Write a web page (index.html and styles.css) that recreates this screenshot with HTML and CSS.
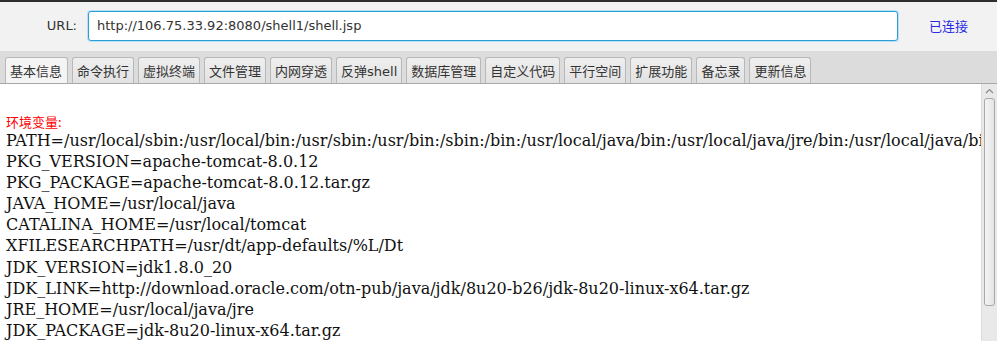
FILE: index.html
```html
<!DOCTYPE html>
<html>
<head>
<meta charset="utf-8">
<link rel="stylesheet" href="styles.css">
</head>
<body>
<div class="topline"></div>
<div class="urlbar">
  <label class="url-label">URL:</label>
  <div class="url-input">http://106.75.33.92:8080/shell1/shell.jsp</div>
  <span class="status">已连接</span>
</div>
<div class="tabs">
  <div class="tab active">基本信息</div>
  <div class="tab">命令执行</div>
  <div class="tab">虚拟终端</div>
  <div class="tab">文件管理</div>
  <div class="tab">内网穿透</div>
  <div class="tab">反弹shell</div>
  <div class="tab">数据库管理</div>
  <div class="tab">自定义代码</div>
  <div class="tab">平行空间</div>
  <div class="tab">扩展功能</div>
  <div class="tab">备忘录</div>
  <div class="tab">更新信息</div>
</div>
<div class="panel">
  <div class="content">
    <div class="heading">环境变量:</div>
    <div class="line">PATH=/usr/local/sbin:/usr/local/bin:/usr/sbin:/usr/bin:/sbin:/bin:/usr/local/java/bin:/usr/local/java/jre/bin:/usr/local/java/bin</div>
    <div class="line">PKG_VERSION=apache-tomcat-8.0.12</div>
    <div class="line">PKG_PACKAGE=apache-tomcat-8.0.12.tar.gz</div>
    <div class="line">JAVA_HOME=/usr/local/java</div>
    <div class="line">CATALINA_HOME=/usr/local/tomcat</div>
    <div class="line">XFILESEARCHPATH=/usr/dt/app-defaults/%L/Dt</div>
    <div class="line">JDK_VERSION=jdk1.8.0_20</div>
    <div class="line">JDK_LINK=http://download.oracle.com/otn-pub/java/jdk/8u20-b26/jdk-8u20-linux-x64.tar.gz</div>
    <div class="line">JRE_HOME=/usr/local/java/jre</div>
    <div class="line">JDK_PACKAGE=jdk-8u20-linux-x64.tar.gz</div>
  </div>
  <div class="scrollbar">
    <div class="arrow">
      <svg width="9" height="6" viewBox="0 0 9 6"><path d="M1 5 L4.5 1.5 L8 5" fill="none" stroke="#8a8a8a" stroke-width="1.2"/></svg>
    </div>
    <div class="thumb"></div>
  </div>
</div>
</body>
</html>
```
FILE: styles.css
```css
html, body {
  margin: 0;
  padding: 0;
  width: 997px;
  height: 341px;
  overflow: hidden;
  background: #ffffff;
  font-family: "DejaVu Sans", "Noto Sans CJK SC", sans-serif;
}
.topline {
  height: 2px;
  background: #2e2e2e;
}
.urlbar {
  height: 49px;
  background: #f2f2f2;
  display: flex;
  align-items: center;
  box-sizing: border-box;
  padding-bottom: 2px;
}
.url-label {
  width: 77px;
  text-align: right;
  font-size: 13px;
  color: #333;
}
.url-input {
  margin-left: 11px;
  width: 810px;
  height: 30px;
  box-sizing: border-box;
  border: 1px solid #2a9fd6;
  border-radius: 3px;
  background: #fff;
  box-shadow: 0 0 0 1px #b9e0f4;
  font-size: 13px;
  color: #333;
  display: flex;
  align-items: center;
  padding-left: 8px;
}
.status {
  margin-left: 31px;
  font-size: 13px;
  color: #2828e6;
}
.tabs {
  height: 33px;
  box-sizing: border-box;
  background: #dcdcdc;
  border-bottom: 1px solid #a8a8a8;
  display: flex;
  align-items: flex-end;
  padding-left: 5px;
  gap: 4px;
}
.tab {
  height: 26px;
  box-sizing: border-box;
  border: 1px solid #b8b8b8;
  border-bottom: none;
  border-radius: 3px 3px 0 0;
  background: linear-gradient(#efefef, #e2e2e2);
  font-size: 13px;
  color: #333;
  padding: 0 4px;
  display: flex;
  align-items: center;
}
.tab.active {
  background: #f4f4f4;
  padding: 0 5px 0 4px;
}
.panel {
  display: flex;
  height: 257px;
}
.content {
  flex: 1;
  padding: 29px 0 0 6px;
  overflow: hidden;
  white-space: nowrap;
}
.heading {
  font-family: "Noto Sans CJK SC", sans-serif;
  font-size: 13px;
  color: #ff0000;
  line-height: 17px;
}
.line {
  font-family: "DejaVu Serif", serif;
  font-size: 16px;
  line-height: 21.1px;
  color: #111;
}
.scrollbar {
  width: 15px;
  background: #e9e9e9;
  border-left: 1px solid #dcdcdc;
  display: flex;
  flex-direction: column;
  align-items: center;
}
.arrow {
  height: 14px;
  display: flex;
  align-items: center;
  justify-content: center;
}
.thumb {
  width: 11px;
  height: 208px;
  box-sizing: border-box;
  border: 1px solid #a9a9a9;
  border-radius: 3px;
  background: linear-gradient(90deg, #f4f4f4, #e4e4e4);
}
```
